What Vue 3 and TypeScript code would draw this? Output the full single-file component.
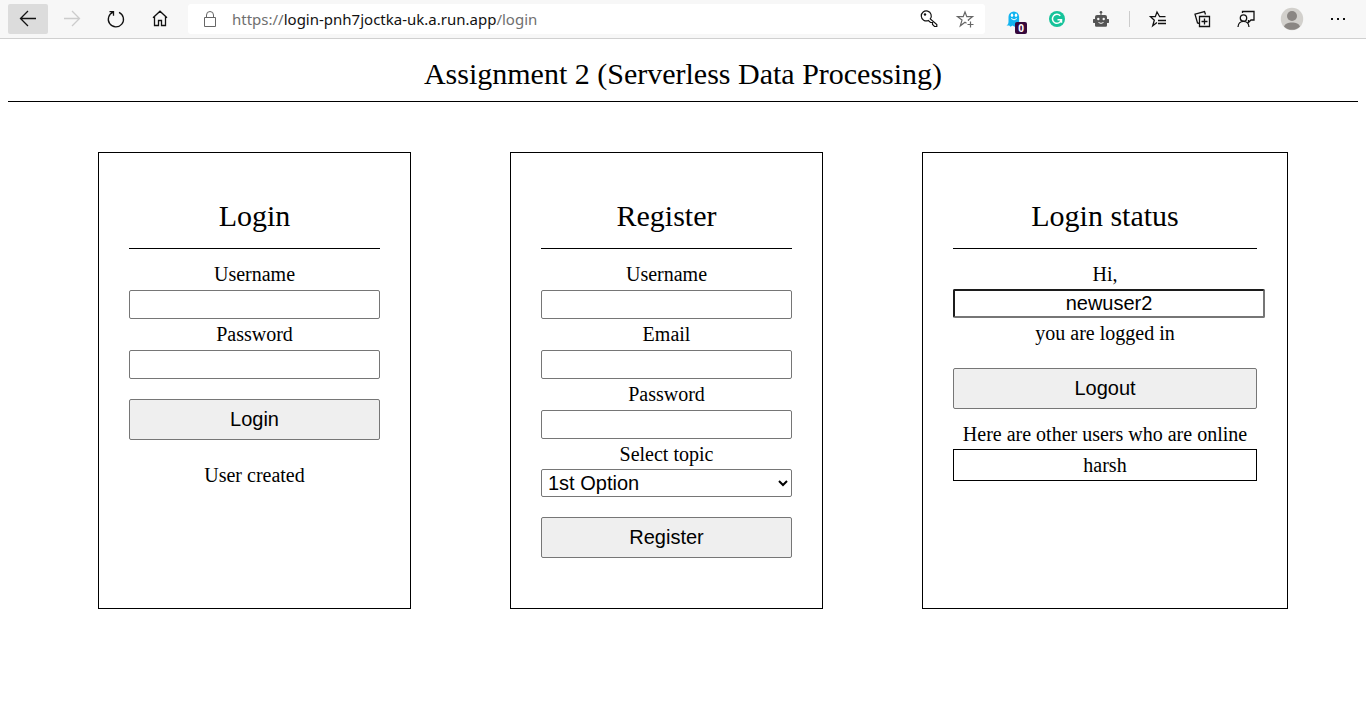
<script setup lang="ts">
import { ref } from 'vue'

interface Field {
  id: string
  label: string
  type: string
}

const loginFields: Field[] = [
  { id: 'login-username', label: 'Username', type: 'text' },
  { id: 'login-password', label: 'Password', type: 'password' },
]

const registerFields: Field[] = [
  { id: 'register-username', label: 'Username', type: 'text' },
  { id: 'register-email', label: 'Email', type: 'email' },
  { id: 'register-password', label: 'Password', type: 'password' },
]

const values = ref<Record<string, string>>({})
const currentUser = ref('newuser2')
const topic = ref('1st Option')
const onlineUsers = ref<string[]>(['harsh'])
</script>

<template>
  <div class="window">
    <header class="toolbar">
      <button class="tool active" type="button" aria-label="Back">
        <svg class="icon" viewBox="0 0 24 24"><path stroke-width="1.3" d="M4.5 11.5H20M12 4l-7.5 7.5L12 19" /></svg>
      </button>
      <button class="tool faded" type="button" aria-label="Forward">
        <svg class="icon" viewBox="0 0 24 24"><path stroke-width="1.3" d="M4 11.5h15.5M12 4l7.5 7.5L12 19" /></svg>
      </button>
      <button class="tool" type="button" aria-label="Refresh">
        <svg class="icon" viewBox="0 0 24 24"><path stroke-width="1.3" d="M9.3 5.2A7.6 7.6 0 1 0 15 5.4M5.5 4.6h4v4.2" /></svg>
      </button>
      <button class="tool" type="button" aria-label="Home">
        <svg class="icon" viewBox="0 0 24 24"><path stroke-width="1.3" d="M5 10.7l7-6.5 7 6.5M6.500 9.500v9h4v-5h3v5h4v-9" /></svg>
      </button>

      <div class="address">
        <svg class="icon gray" viewBox="0 0 24 24"><path d="M6.500 10.500h11v9h-11zM8.500 10.500V8a3.500 3.500 0 0 1 7 0v2.500" /></svg>
        <div class="url" role="textbox" aria-label="Address"><span>https://</span><span class="host">login-pnh7joctka-uk.a.run.app</span><span>/login</span></div>
        <button class="mini" type="button" aria-label="Saved passwords">
          <svg class="icon" viewBox="0 0 24 24"><path stroke-width="1.2" d="M13.3 11.9A5 5 0 1 0 11.3 13.5L13.5 15.500H15.5V17.500L17.5 19.500H19.8V17.500L13.3 11.900z" /><circle class="solid" cx="8" cy="7.5" r="1.2" /></svg>
        </button>
        <button class="mini" type="button" aria-label="Add to favorites">
          <svg class="icon gray" viewBox="0 0 24 24"><path stroke-width="1.2" d="M13.5 16.2L12 15.2l-4.7 3.6 1.7-5.7-4.500-3.400h5.700L12 5l1.800 4.700h5.700l-4.200 3.200.3 1M17.500 14.500v6M14.500 17.500h6" /></svg>
        </button>
      </div>

      <button class="tool" type="button" aria-label="Ghostery">
        <svg class="icon" viewBox="0 0 24 24"><path fill="#12b4f0" stroke="none" d="M7.500 14.500V9.700a5.300 5.300 0 0 1 10.600 0V19l-2.600-.6-2 1.400-2-1.400-2 1.400-1.300-1.300H5.500c1.500-1 2-2 2-4z" /><g fill="#fff" stroke="none"><ellipse cx="11" cy="8.2" rx="1.2" ry="1.700" /><ellipse cx="15" cy="8.2" rx="1.2" ry="1.700" /></g><path stroke="#fff" d="M10.200 11.500q2.800 2.800 5.600 0" /></svg>
        <span class="badge">0</span>
      </button>
      <button class="tool" type="button" aria-label="Grammarly">
        <svg class="icon" viewBox="0 0 24 24"><circle cx="12" cy="12" r="8" fill="#15c39a" stroke="none" /><path stroke="#fff" stroke-width="1.5" d="M15.3 8.800A4.500 4.500 0 1 0 16.300 13M12.500 12.700h4v3" /></svg>
      </button>
      <button class="tool" type="button" aria-label="Robot extension">
        <svg class="icon" viewBox="0 0 24 24"><g fill="#555" stroke="none"><circle cx="12" cy="5.3" r="1.3" /><path d="M11.500 6h1v2h3.500a2 2 0 0 1 2 2v2h1.500l.5.5v3l-.5.5H18v2.500a1.300 1.300 0 0 1-1.300 1.300H7.300A1.300 1.300 0 0 1 6 18.500V16H4.500l-.5-.5v-3l.5-.5H6v-2a2 2 0 0 1 2-2h3.500z" /></g><g fill="#f7f7f7" stroke="none"><circle cx="9.3" cy="12" r="1.2" /><circle cx="14.7" cy="12" r="1.2" /></g><path stroke="#f7f7f7" d="M9.500 15.500q2.500 1.800 5 0" /></svg>
      </button>
      <span class="divider"></span>
      <button class="tool" type="button" aria-label="Favorites">
        <svg class="icon" viewBox="0 0 24 24"><path stroke-width="1.3" d="M19.500 9.700h-5.800L11 5 9.300 9.700H4.500l3.800 3.500-1.600 5.600 4.300-3.300M12 13.500h8M12 16.500h8" /></svg>
      </button>
      <button class="tool" type="button" aria-label="Collections">
        <svg class="icon" viewBox="0 0 24 24"><path stroke-width="1.3" d="M9.500 9.500h10v10h-10zM14.500 11.500v6M11.500 14.500h6M9.500 16.500l-2-.5L5 7.200l9.500-2.700 1 3" /></svg>
      </button>
      <button class="tool" type="button" aria-label="Send feedback">
        <svg class="icon" viewBox="0 0 24 24"><circle cx="9.500" cy="11" r="3.200" stroke-width="1.3" /><path stroke-width="1.3" d="M4 20c.3-7.500 10.700-7.500 11 0M8.500 6V4.500H20V13h-3l-2.500 2.500V13" /></svg>
      </button>
      <button class="tool profile" type="button" aria-label="Profile">
        <svg class="icon" viewBox="0 0 24 24"><circle cx="12" cy="12" r="11.200" fill="#d2d0cc" stroke="none" /><circle cx="12" cy="9" r="5" fill="#8a8683" stroke="none" /><path fill="#8a8683" stroke="none" d="M4 19.500c1.500-5.500 14.500-5.500 16 0a11.200 11.200 0 0 1-16 0z" /></svg>
      </button>
      <button class="tool" type="button" aria-label="Settings and more">
        <svg class="icon" viewBox="0 0 24 24"><path class="solid" d="M5 11h2v2H5zM11 11h2v2h-2zM17 11h2v2h-2z" /></svg>
      </button>
    </header>

    <main class="page">
      <h1 class="title">Assignment 2 (Serverless Data Processing)</h1>

      <div class="cards">
        <form class="card" @submit.prevent>
          <h2 class="heading">Login</h2>
          <template v-for="field in loginFields" :key="field.id">
            <label class="line" :for="field.id">{{ field.label }}</label>
            <input :id="field.id" v-model="values[field.id]" class="control text" :type="field.type" />
          </template>
          <button class="submit" type="submit">Login</button>
          <p class="line message">User created</p>
        </form>

        <form class="card" @submit.prevent>
          <h2 class="heading">Register</h2>
          <template v-for="field in registerFields" :key="field.id">
            <label class="line" :for="field.id">{{ field.label }}</label>
            <input :id="field.id" v-model="values[field.id]" class="control text" :type="field.type" />
          </template>
          <label class="line" for="topic">Select topic</label>
          <select id="topic" v-model="topic" class="control select">
            <option>1st Option</option>
            <option>2nd Option</option>
          </select>
          <button class="submit" type="submit">Register</button>
        </form>

        <form class="card status" @submit.prevent>
          <h2 class="heading">Login status</h2>
          <label class="line" for="current-user">Hi,</label>
          <input id="current-user" v-model="currentUser" class="current" type="text" readonly />
          <p class="line">you are logged in</p>
          <button class="submit" type="submit">Logout</button>
          <p class="line online">Here are other users who are online</p>
          <ul class="users">
            <li v-for="user in onlineUsers" :key="user" class="line">{{ user }}</li>
          </ul>
        </form>
      </div>
    </main>
  </div>
</template>

<style>
body {
  margin: 0;
  background: #fff;
}
</style>

<style scoped>
.window {
  color: #000;
  font-family: "Liberation Serif", "Times New Roman", serif;
  font-size: 20px;
}

.toolbar {
  display: flex;
  align-items: center;
  gap: 4px;
  height: 38px;
  padding: 0 8px;
  background: #f7f7f7;
  border-bottom: 1px solid #d0d0d0;
}

.tool,
.mini {
  position: relative;
  display: flex;
  flex: none;
  align-items: center;
  justify-content: center;
  width: 40px;
  height: 30px;
  padding: 0;
  border: 0;
  border-radius: 2px;
  background: none;
  color: #111;
}

.mini {
  width: 36px;
}

.tool.active {
  background: #dcdcdc;
}

.tool.faded {
  color: #ccc;
}

.tool.profile {
  width: 44px;
}

.icon {
  display: block;
  flex: none;
  width: 24px;
  height: 24px;
  fill: none;
  stroke: currentColor;
}

.icon.gray {
  color: #666;
}

.solid {
  fill: currentColor;
  stroke: none;
}

.badge {
  position: absolute;
  right: 6px;
  bottom: 0;
  width: 12px;
  border-radius: 2px;
  background: #36083c;
  color: #fff;
  font: bold 10px/12px "Open Sans", sans-serif;
  text-align: center;
}

.divider {
  width: 1px;
  height: 16px;
  margin: 0 4px;
  background: #ccc;
}

.address {
  display: flex;
  flex: 1;
  align-items: center;
  min-width: 0;
  height: 30px;
  margin: 0 4px;
  padding: 0 2px 0 10px;
  border-radius: 3px;
  background: #fff;
}

.url {
  flex: 1;
  min-width: 0;
  margin-left: 10px;
  overflow: hidden;
  color: #6f6f6f;
  font: 15px/24px "Noto Sans", sans-serif;
  white-space: nowrap;
}

.host {
  color: #111;
}

.page {
  padding: 18px 8px 0;
}

.title,
.heading {
  margin: 0;
  border-bottom: 1px solid #000;
  font-size: 30px;
  font-weight: 400;
  line-height: 34px;
  text-align: center;
}

.title {
  padding-bottom: 10px;
}

.cards {
  display: flex;
  justify-content: space-between;
  padding: 50px 70px 20px 90px;
}

.card {
  box-sizing: border-box;
  width: 313px;
  padding: 46px 30px 50px;
  border: 1px solid #000;
}

.card.status {
  width: 366px;
}

.heading {
  margin-bottom: 10px;
  padding-bottom: 15px;
}

.line {
  display: block;
  margin: 0;
  line-height: 30px;
  text-align: center;
}

.control,
.current,
.submit {
  display: block;
  border: 1px solid #767676;
  border-radius: 2px;
  background: #fff;
  color: #000;
  font: 20px/23px "Liberation Sans", Arial, sans-serif;
  outline: none;
}

.control {
  box-sizing: border-box;
  width: 100%;
}

.text {
  height: 29px;
  margin: 1px 0 0;
  padding: 2px;
}

.select {
  height: 28px;
  margin: 0;
  padding: 0 2px;
}

.current {
  width: 100%;
  height: 23px;
  margin: 0;
  padding: 1px 2px;
  border-width: 2px;
  border-color: #1c1c1c #767676 #767676 #1c1c1c;
  text-align: center;
}

.submit {
  width: 100%;
  height: 41px;
  margin: 20px 0 0;
  padding: 0;
  background: #efefef;
}

.message {
  margin-top: 20px;
}

.online {
  margin-top: 10px;
}

.users {
  margin: 0;
  padding: 0;
  border: 1px solid #000;
  list-style: none;
}
</style>
